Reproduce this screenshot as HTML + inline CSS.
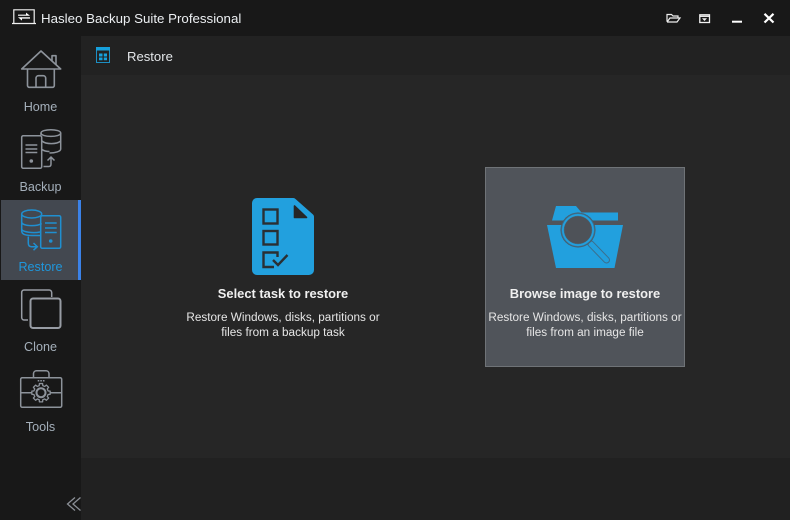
<!DOCTYPE html>
<html><head><meta charset="utf-8"><style>
html,body{margin:0;padding:0;background:#181818}
#w{position:relative;width:790px;height:520px;overflow:hidden;background:#181818;font-family:"Liberation Sans","Noto Sans CJK JP",sans-serif}
#w div{position:absolute}
.t{white-space:nowrap;text-align:center}
.n{left:0;width:81px;font-size:12.6px;color:#a4afba;text-align:center;line-height:16px}
svg{position:absolute;overflow:visible}
.d{color:#e6e6e6;font-size:11.75px;line-height:15px}
.h{color:#f0f0f0;font-size:12.9px;font-weight:bold;line-height:16px}
</style></head><body><div id="w">
<div style="left:81px;top:36px;width:709px;height:39px;background:#222222"></div>
<div style="left:81px;top:75px;width:709px;height:383px;background:#262626"></div>
<div style="left:81px;top:458px;width:709px;height:62px;background:#212121"></div>
<div style="left:1px;top:200px;width:77px;height:80px;background:#434850"></div>
<div style="left:78px;top:200px;width:3px;height:80px;background:#3b82e8"></div>
<div style="left:485px;top:167px;width:198px;height:198px;background:#50545a;border:1px solid #6f7377"></div>

<svg style="left:0;top:0" width="790" height="520" fill="none">
<!-- logo -->
<path d="M13.800 23V9.800H34.200V23" stroke="#f2f2f2" stroke-width="1.200"/>
<path d="M12 23.500H36" stroke="#f2f2f2" stroke-width="1.300"/>
<path d="M18 14.600H26V12.600L30 15.800H18ZM30 17.300H18L22 20.600V18.600H30Z" fill="#ffffff"/>
<!-- top buttons -->
<path d="M667 21.500V14.500H671.500L673 16H678V18M667 22H677L680 18H670L667 22" stroke="#ededed" stroke-width="1.200"/>
<rect x="699.800" y="14.800" width="9.700" height="7.700" stroke="#f2f2f2" stroke-width="1.300"/>
<path d="M700 16.300H709.500" stroke="#f2f2f2" stroke-width="1.300"/><path d="M702 18.200H707L704.500 21Z" fill="#f2f2f2"/>
<path d="M732 21.700H742" stroke="#fff" stroke-width="2"/>
<path d="M764.500 13.800L773.500 22.500M773.500 13.800L764.500 22.500" stroke="#fff" stroke-width="2.200"/>
<!-- header icon -->
<rect x="96.500" y="47.500" width="13" height="15" stroke="#1d8fc4"/>
<rect x="96" y="47" width="14" height="3.500" fill="#16a0dc"/>
<path d="M99 53.500H102.500V56.500H99ZM103.800 53.500H107V56.500H103.800ZM99 57.500H102.500V60.300H99ZM103.800 57.500H107V60.300H103.800Z" fill="#16a0dc"/>
<!-- home -->
<g stroke="#8d939b" stroke-width="1.600" stroke-linejoin="round">
<path d="M21.700 69L41 51L60.700 69H21.700Z"/>
<path d="M52 60.500V55.700H56V64.500"/>
<path d="M27.500 69V85.500A1.800 1.800 0 0 0 29.300 87.300H52.500A1.800 1.800 0 0 0 54.300 85.500V69"/>
<path d="M36 87V78.200A2.500 2.500 0 0 1 38.500 75.700H43.200A2.500 2.500 0 0 1 45.700 78.200V87"/>
</g>
<!-- backup -->
<g stroke="#8d939b" stroke-width="1.500">
<rect x="21.700" y="135.700" width="20" height="32.600" rx="1.500"/>
<path d="M25.500 145H37.300M25.500 149H37.300M25.500 152.500H37.300"/>
<path d="M41 135V133C41 128.700 60.700 128.700 60.700 133V149C60.700 151.500 55 153 49.500 153"/>
<path d="M41 133C41 137.500 60.700 137.500 60.700 133M42 141C46 144.500 56.500 144.500 60.700 141M42 149.500C44 151 47 151.500 49.500 151.500"/>
<path d="M43.500 166.500H48.800C50.300 166.500 51 165.500 51 164V157M47.500 160.500L51 157L54.500 160.500"/>
</g>
<circle cx="31.300" cy="161" r="1.800" fill="#8d939b"/>
<!-- restore -->
<g stroke="#1f8fd0" stroke-width="1.500">
<rect x="40.700" y="215.700" width="20" height="32.600" rx="1.500"/>
<path d="M45 223H56.700M45 228H56.700M45 232.500H56.700"/>
<ellipse cx="31.700" cy="214" rx="10" ry="4"/>
<path d="M21.700 214V231C21.700 234.500 27 235.500 31.700 235.500H40M21.700 222C21.700 226 36 227 41.700 223.500M21.700 229.500C23 232 33 233.500 40 232"/>
<path d="M28.300 236.500V243C28.300 245.500 29.500 246.700 31.500 246.700H37.300M33.500 243L37.300 246.700L33.500 250.200"/>
</g>
<circle cx="50.700" cy="241" r="1.800" fill="#1f8fd0"/>
<!-- clone -->
<g stroke="#979ca4" stroke-width="1.500">
<path d="M28 320H24A2.500 2.500 0 0 1 21.700 317.500V292.500A2.500 2.500 0 0 1 24 290H49A2.500 2.500 0 0 1 51.700 292.500V297"/>
<rect x="30.500" y="298.500" width="30" height="29.500" rx="2.500" stroke-width="2"/>
</g>
<!-- tools -->
<g stroke="#8d939b" stroke-width="1.500">
<rect x="20.700" y="377.700" width="41" height="29.600" rx="1.500"/>
<path d="M33.500 377.500V373.500A3 3 0 0 1 36.500 370.800H46A3 3 0 0 1 49 373.500V377.500"/>
<path d="M21 392.700H31.700M50.300 392.700H61"/>
<g transform="translate(41,392.700)">
<path d="M7.080 -1.770L9.160 -1.610L9.160 1.610L7.080 1.770L6.260 3.760L7.620 5.330L5.330 7.620L3.760 6.260L1.770 7.080L1.610 9.160L-1.610 9.160L-1.770 7.080L-3.760 6.260L-5.330 7.620L-7.620 5.330L-6.260 3.760L-7.080 1.770L-9.160 1.610L-9.160 -1.610L-7.080 -1.770L-6.260 -3.760L-7.620 -5.330L-5.330 -7.620L-3.760 -6.260L-1.770 -7.080L-1.610 -9.160L1.610 -9.160L1.770 -7.080L3.760 -6.260L5.330 -7.620L7.620 -5.330L6.260 -3.760Z" stroke-width="1.300" stroke-linejoin="round"/>
<circle r="4.500" stroke-width="2"/>
</g>
<path d="M37.700 380.700H44.500" stroke-dasharray="1.600 1" stroke-width="1.500"/>
</g>
<!-- collapse -->
<path d="M75 497.500L67.500 504L75 510.500M80.500 497.500L73 504L80.500 510.500" stroke="#8b8f96" stroke-width="1.300"/>
<!-- task icon -->
<path d="M257 198H293A3 3 0 0 1 295.500 199L313 214.500A3 3 0 0 1 314 217V270A5 5 0 0 1 309 275H257A5 5 0 0 1 252 270V203A5 5 0 0 1 257 198Z" fill="#22a0de"/>
<path d="M294.500 206V217.500H306.500Z" fill="#262626" stroke="#262626" stroke-width="1.600" stroke-linejoin="round"/>
<g stroke="#2a2f33" stroke-width="2.400">
<rect x="263.500" y="209.500" width="14" height="14"/>
<rect x="263.500" y="231" width="14" height="13.500"/>
<path d="M277.500 257V252.500H263.500V267H274"/>
<path d="M273 260L278 265L287.500 255"/>
</g>
<!-- folder icon -->
<path d="M556 206H576L581.500 212.500H618V220.500H552Z" fill="#22a0de"/>
<path d="M547 225H623L614.500 268H556Z" fill="#22a0de"/>
<path d="M591 244L606.500 260" stroke="#3c6e8c" stroke-width="7" stroke-linecap="round"/>
<path d="M591 244L606.500 260" stroke="#22a0de" stroke-width="5" stroke-linecap="round"/>
<circle cx="578" cy="230" r="17.500" fill="#50545a"/>
<circle cx="578" cy="230" r="16.500" fill="#22a0de" stroke="#3c6e8c" stroke-width="1"/>
<circle cx="578" cy="230" r="14" fill="#4e5258" stroke="#3c6e8c" stroke-width=".5"/>
</svg>

<div class="t" style="left:41px;top:10px;width:200px;text-align:left;color:#eceff2;font-size:13.3px;line-height:17px">Hasleo Backup Suite Professional</div>
<div class="t" style="left:127px;top:49px;width:50px;text-align:left;color:#e3e6e9;font-size:13.1px;line-height:16px">Restore</div>
<div class="n t" style="top:99px">Home</div>
<div class="n t" style="top:179px">Backup</div>
<div class="n t" style="top:259px;color:#1f97dc">Restore</div>
<div class="n t" style="top:339px">Clone</div>
<div class="n t" style="top:419px">Tools</div>
<div class="t h" style="left:183px;top:286px;width:200px">Select task to restore</div>
<div class="t d" style="left:173px;top:310px;width:220px">Restore Windows, disks, partitions or<br>files from a backup task</div>
<div class="t h" style="left:485px;top:286px;width:200px">Browse image to restore</div>
<div class="t d" style="left:475px;top:310px;width:220px">Restore Windows, disks, partitions or<br>files from an image file</div>
</div></body></html>
